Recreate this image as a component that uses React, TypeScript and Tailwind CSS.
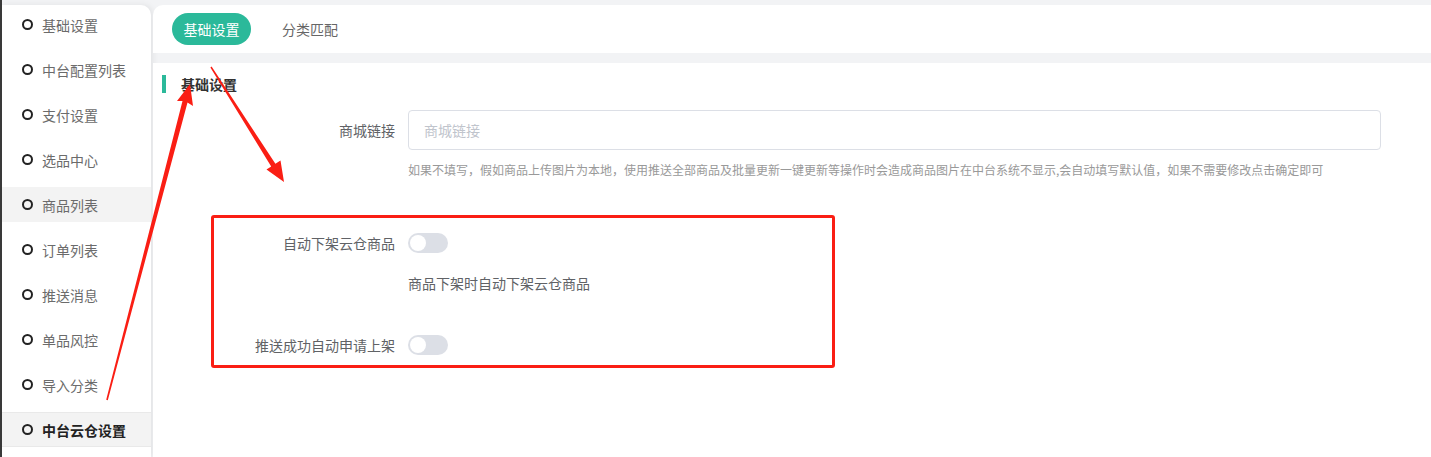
const menu = [
  '基础设置',
  '中台配置列表',
  '支付设置',
  '选品中心',
  '商品列表',
  '订单列表',
  '推送消息',
  '单品风控',
  '导入分类',
  '中台云仓设置',
];

function Switch() {
  return (
    <div className="w-[40px] h-[20px] rounded-full bg-[#dcdfe6] relative shrink-0">
      <div className="absolute left-[2px] top-[2px] w-[16px] h-[16px] rounded-full bg-white" />
    </div>
  );
}

export default function App() {
  return (
    <div className="relative w-[1431px] h-[457px] overflow-hidden flex bg-[#f2f3f5] font-['Noto_Sans_CJK_SC',sans-serif] text-[14px]">
      <div className="w-[2px] h-full bg-[#3a3a3a] shrink-0" />

      <div className="flex-1 flex pt-[5px]">
        {/* sidebar */}
        <aside className="w-[149px] shrink-0 bg-white rounded-tr-[10px] shadow-[2px_0_6px_rgba(0,0,0,0.07)] pt-[2px]">
          {menu.map((label, i) => {
            const active = i === 9;
            const hover = i === 4;
            return (
              <div
                key={label}
                className={`h-[35px] mb-[10px] flex items-center pl-[20px] gap-[9px] ${
                  active ? 'bg-[#f3f3f3] border-y border-[#e9e9e9]' : hover ? 'bg-[#f3f3f3]' : ''
                }`}
              >
                <span className="w-[11px] h-[11px] shrink-0 rounded-full border-2 border-[#222]" />
                <span className={`leading-[20px] ${active ? 'font-bold text-[#222]' : 'text-[#6b6b6b]'}`}>{label}</span>
              </div>
            );
          })}
        </aside>

        {/* main */}
        <main className="flex-1 ml-[2px] flex flex-col">
          <div className="h-[48px] bg-white rounded-tl-[10px] flex items-center pl-[19px]">
            <div className="w-[79px] h-[32px] rounded-full bg-[#2bb99a] text-white flex items-center justify-center leading-[20px]">
              基础设置
            </div>
            <div className="ml-[31px] text-[#666] leading-[20px]">分类匹配</div>
          </div>

          <div className="mt-[10px] flex-1 bg-white flex flex-col">
            <div className="mt-[12px] h-[18px] flex items-center">
              <div className="ml-[9px] w-[4px] h-[18px] bg-[#2bb99a]" />
              <div className="ml-[15px] font-bold text-[#333] leading-[20px]">基础设置</div>
            </div>

            <div className="mt-[17px] flex items-center">
              <div className="w-[242px] text-right text-[#606266] leading-[20px]">商城链接</div>
              <div className="ml-[13px] w-[973px] h-[40px] border border-[#dcdfe6] rounded-[4px] flex items-center pl-[15px] text-[#c0c4cc] leading-[20px]">
                商城链接
              </div>
            </div>
            <div className="mt-[10px] ml-[255px] text-[12px] leading-[20px] text-[#999]">
              如果不填写，假如商品上传图片为本地，使用推送全部商品及批量更新一键更新等操作时会造成商品图片在中台系统不显示,会自动填写默认值，如果不需要修改点击确定即可
            </div>

            <div className="mt-[53px] flex items-center h-[20px]">
              <div className="w-[242px] text-right text-[#606266] leading-[20px]">自动下架云仓商品</div>
              <div className="ml-[13px]">
                <Switch />
              </div>
            </div>
            <div className="mt-[20px] ml-[255px] leading-[20px] text-[#606266]">商品下架时自动下架云仓商品</div>

            <div className="mt-[42px] flex items-center h-[20px]">
              <div className="w-[242px] text-right text-[#606266] leading-[20px]">推送成功自动申请上架</div>
              <div className="ml-[13px]">
                <Switch />
              </div>
            </div>
          </div>
        </main>
      </div>

      {/* annotations */}
      <div className="absolute left-[211px] top-[215px] w-[624px] h-[153px] border-[3px] border-[#fa1e14] rounded-[3px] pointer-events-none" />
      <svg className="absolute inset-0 pointer-events-none" width="1431" height="457" viewBox="0 0 1431 457">
        <polygon
          fill="#fa1e14"
          points="190,84 193,106 187.5,102.5 107.8,400.2 106.2,399.8 182.5,101 177,101"
        />
        <polygon
          fill="#fa1e14"
          points="284,182 266.5,169.5 271.2,166.4 210.4,67.4 211.6,66.6 275.4,163.8 280.5,160.5"
        />
      </svg>
    </div>
  );
}
